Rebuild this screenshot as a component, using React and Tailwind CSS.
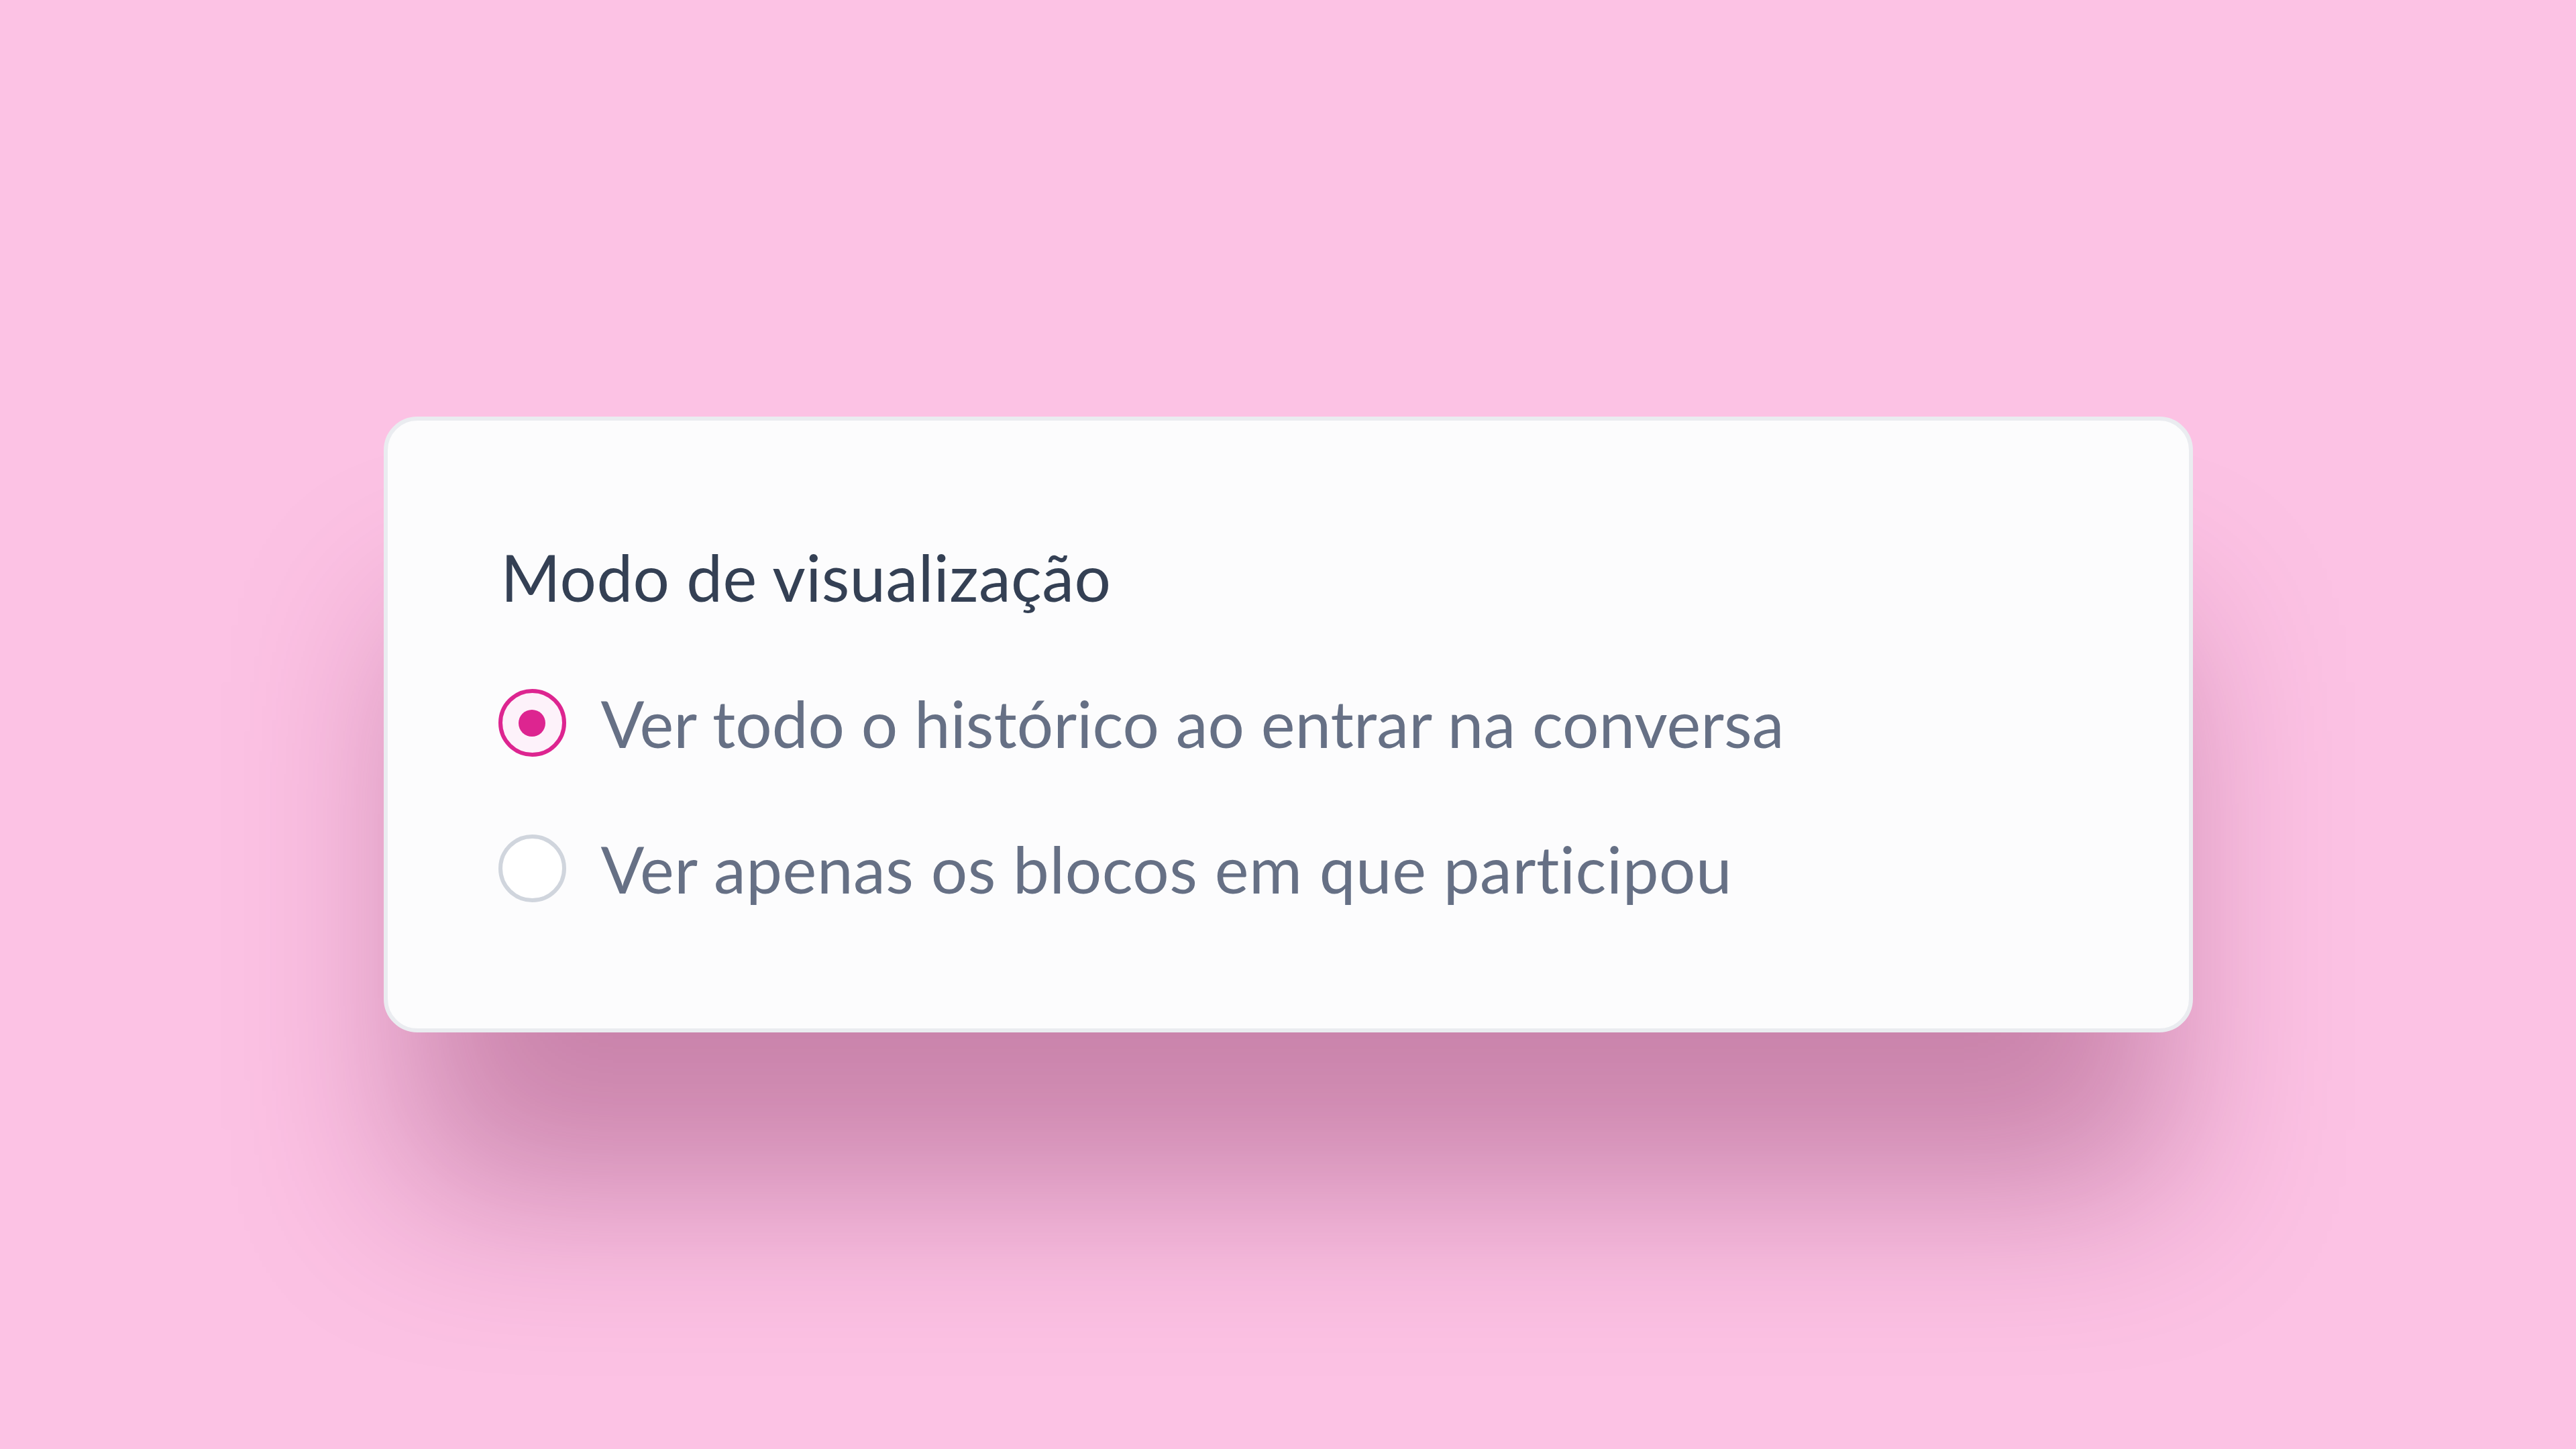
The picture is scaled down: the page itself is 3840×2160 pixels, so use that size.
import React from "react";

function Radio({ checked }) {
  return checked ? (
    <span className="flex h-[101px] w-[101px] shrink-0 items-center justify-center rounded-full border-[6px] border-[#DD2590] bg-[#FDF2FA]">
      <span className="h-[40px] w-[40px] rounded-full bg-[#DD2590]" />
    </span>
  ) : (
    <span className="h-[101px] w-[101px] shrink-0 rounded-full border-[6px] border-[#D0D5DD] bg-white" />
  );
}

export default function App() {
  const options = [
    { label: "Ver todo o histórico ao entrar na conversa", checked: true },
    { label: "Ver apenas os blocos em que participou", checked: false },
  ];
  return (
    <div className="flex h-[2160px] w-[3840px] items-center justify-center overflow-hidden bg-[#FCC2E4] font-['Lato','Liberation_Sans',sans-serif]">
      <div className="flex w-[2697px] flex-col gap-[103px] rounded-[50px] border-[6px] border-[#EAECF0] bg-[#FCFCFD] pb-[181px] pl-[165px] pt-[175px] shadow-[0_270px_360px_-40px_rgba(110,20,70,0.36)]">
        <h2 className="pl-[4px] text-[96px] leading-[115px] font-normal tracking-[0.4px] text-[#344054]">
          Modo de visualização
        </h2>
        <div className="flex flex-col gap-[102px]">
          {options.map((o) => (
            <label key={o.label} className="flex items-center gap-[52px]">
              <Radio checked={o.checked} />
              <span className={`text-[96px] leading-[115px] text-[#667085] ${o.checked ? "tracking-[0.1px]" : "tracking-[0.6px]"}`}>{o.label}</span>
            </label>
          ))}
        </div>
      </div>
    </div>
  );
}
